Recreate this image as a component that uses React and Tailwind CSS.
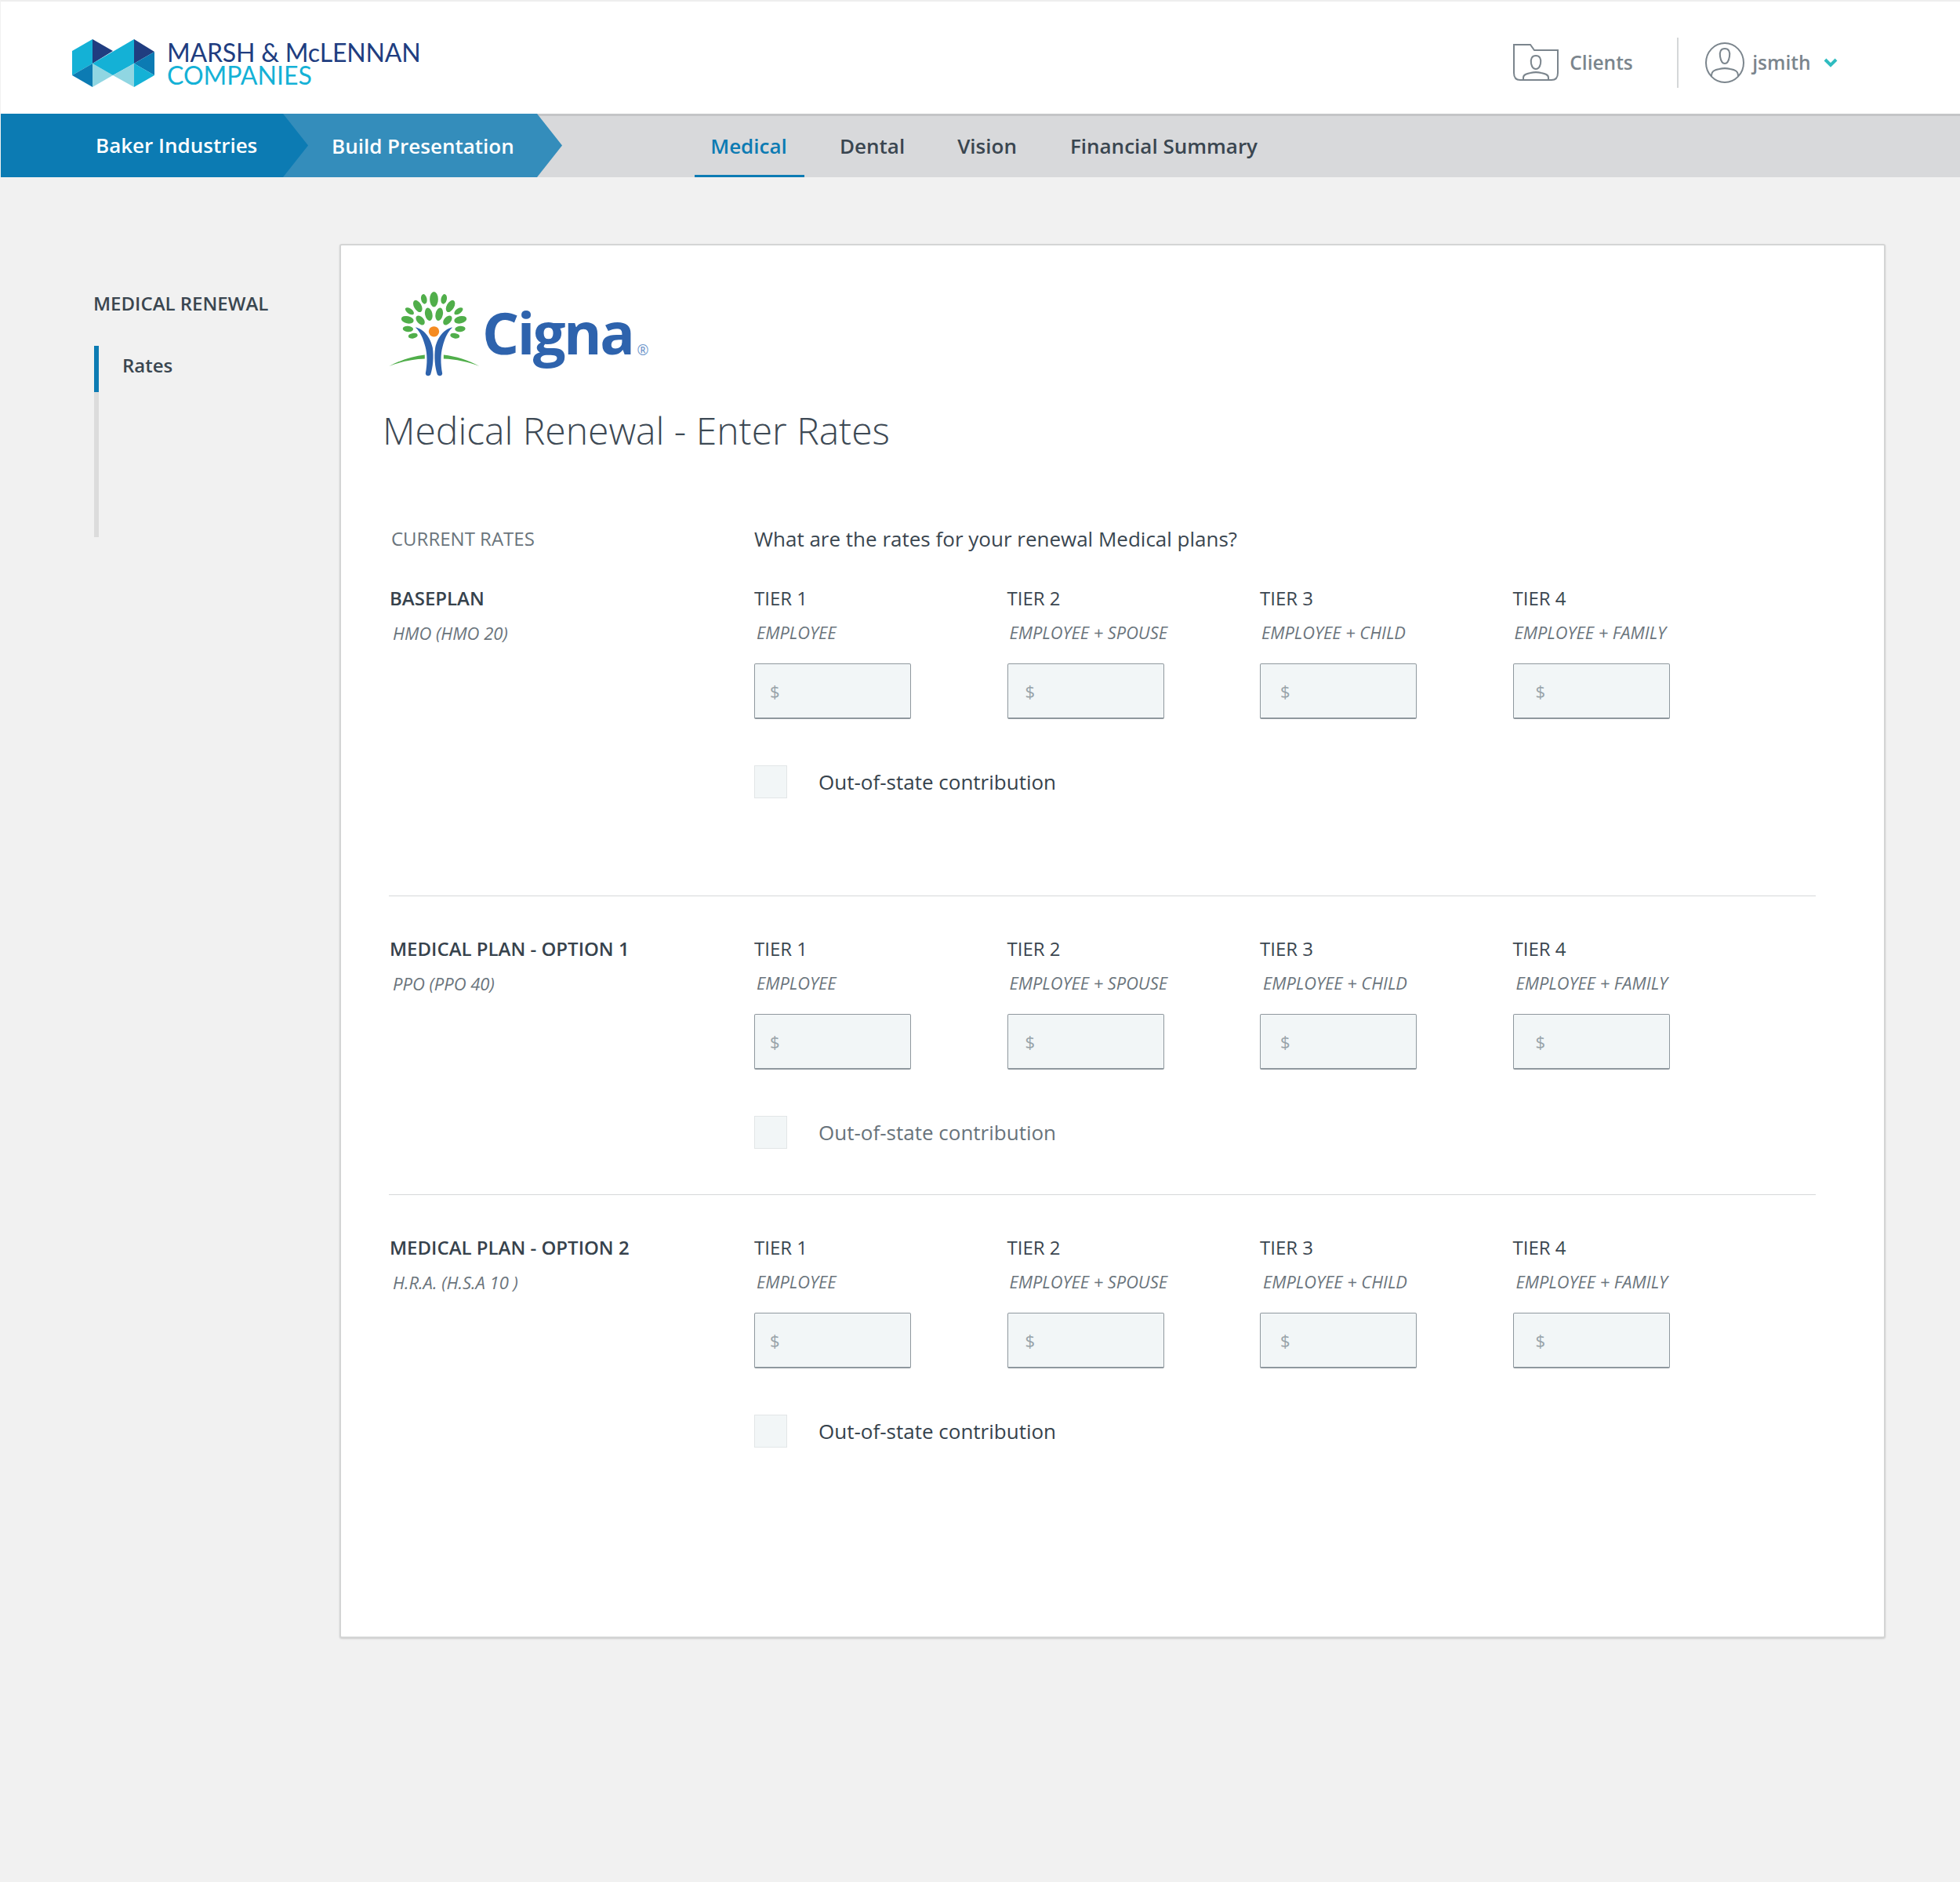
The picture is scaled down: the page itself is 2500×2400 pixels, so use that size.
import React from "react";

const FONT = "font-['Open_Sans',sans-serif]";

const tiers = [
  { tier: "TIER 1", sub: "EMPLOYEE", dollar: "pl-[19px]", base: "pl-[3px]", shift: "pl-[3px]" },
  { tier: "TIER 2", sub: "EMPLOYEE + SPOUSE", dollar: "pl-[22px]", base: "pl-[3px]", shift: "pl-[3px]" },
  { tier: "TIER 3", sub: "EMPLOYEE + CHILD", dollar: "pl-[25px]", base: "pl-[2px]", shift: "pl-[4px]" },
  { tier: "TIER 4", sub: "EMPLOYEE + FAMILY", dollar: "pl-[28px]", base: "pl-[2px]", shift: "pl-[4px]" },
];

function MarshLogo() {
  return (
    <svg width="108" height="63" viewBox="91 50 108 63" className="shrink-0">
      <polygon points="92,66 118,51 118,82 92,97" fill="#14b1d6" />
      <polygon points="118,51 144,66 118,82" fill="#203d80" />
      <polygon points="92,97 118,82 118,112" fill="#0c7bb3" />
      <polygon points="118,82 144,97 118,112" fill="#90d6e2" />
      <polygon points="118,82 171,51 171,82 144,97" fill="#14b1d6" />
      <polygon points="144,97 171,82 171,112" fill="#90d6e2" />
      <polygon points="171,51 197,67 171,82" fill="#203d80" />
      <polygon points="171,82 197,67 197,97" fill="#0c7bb3" />
      <polygon points="171,82 197,97 171,112" fill="#14b1d6" />
    </svg>
  );
}

function CignaTree() {
  const leaves = [
    [341, 125, 16, 29, 0], [303, 124, 11, 19, -12], [379, 124, 11, 19, 12],
    [279, 151, 14, 25, -30], [404, 151, 14, 25, 30], [248, 170, 10, 19, -55], [435, 170, 10, 19, 55],
    [240, 203, 24, 14, 12], [442, 203, 24, 14, -12], [321, 182, 14, 25, -12], [361, 182, 14, 25, 12],
    [289, 205, 13, 21, -42], [393, 205, 13, 21, 42], [242, 238, 20, 11, 4], [441, 238, 20, 11, -4],
    [261, 264, 18, 10, -10], [421, 264, 18, 10, 10],
  ];
  return (
    <svg width="122" height="112" viewBox="160 90 365 335" className="shrink-0">
      {leaves.map(([cx, cy, rx, ry, a], i) => (
        <ellipse key={i} cx={cx} cy={cy} rx={rx} ry={ry} fill="#50ae4a" transform={`rotate(${a} ${cx} ${cy})`} />
      ))}
      <circle cx="341" cy="248" r="20" fill="#f58b21" />
      <path d="M270 232 C300 236 328 270 336 310 C341 345 337 385 328 412 C320 420 310 418 309 408 C316 370 316 335 308 305 C300 275 290 250 270 232 Z" fill="#2e63ad" />
      <path d="M412 232 C382 236 354 270 346 310 C341 345 345 385 354 412 C362 420 372 418 373 408 C366 370 366 335 374 305 C382 275 392 250 412 232 Z" fill="#2e63ad" />
      <path d="M170 380 C210 358 260 342 306 337 L306 352 C260 354 210 364 170 380 Z" fill="#50ae4a" />
      <path d="M514 380 C474 358 424 342 378 337 L378 352 C424 354 474 364 514 380 Z" fill="#50ae4a" />
    </svg>
  );
}

function FolderIcon() {
  return (
    <svg width="60" height="50" viewBox="0 0 60 50" fill="none" stroke="#7b858d" strokeWidth="2" className="shrink-0">
      <path d="M2 2 H23 L28 9 H58 V38 C58 44 55 47 50 47 H10 C5 47 2 44 2 38 Z" />
      <path d="M30 16 C35 16 37 20 36 26 C35 31 33 33 30 33 C27 33 25 31 24 26 C23 20 25 16 30 16 Z" />
      <path d="M14 47 V44 C14 40 18 39 23 38 C27 37 33 37 37 38 C42 39 46 40 46 44 V47" />
    </svg>
  );
}

function UserIcon() {
  return (
    <svg width="50" height="52" viewBox="0 0 50 52" fill="none" stroke="#7b858d" strokeWidth="2" className="shrink-0">
      <ellipse cx="25" cy="26" rx="24" ry="25" />
      <path d="M25 8 C30 8 32 12 31 18 C30 24 28 27 25 27 C22 27 20 24 19 18 C18 12 20 8 25 8 Z" />
      <path d="M8 43 C8 36 13 35 18 34 C22 33 28 33 32 34 C37 35 42 36 42 43" />
    </svg>
  );
}

function Tier({ t, shifted }) {
  return (
    <div className="w-[322.5px]">
      <div className="text-[24px] leading-[32px] text-[#3a4650]">{t.tier}</div>
      <div className={`mt-[12px] ${shifted ? t.shift : t.base} text-[21.8px] leading-[32px] italic text-[#6a747c]`}>{t.sub}</div>
      <div className="mt-[23px] flex h-[71px] w-[200px] items-center rounded-[2px] border border-[#8f989e] border-b-2 bg-[#f2f6f7] text-[22px]">
        <span className={`${t.dollar} text-[#98a3a9]`}>$</span>
      </div>
    </div>
  );
}

function Plan({ name, type, muted, padBottom, divider, shifted }) {
  return (
    <section className={`${padBottom} ${divider ? "border-b border-[#d6d8d9]" : ""} flex w-[1820px]`}>
      <div className="w-[466px] pl-[1px]">
        <div className="text-[24px] font-semibold leading-[32px] text-[#36424c]">{name}</div>
        <div className="mt-[12px] pl-[4px] text-[22px] leading-[32px] italic text-[#6a747c]">{type}</div>
      </div>
      <div>
        <div className="flex">
          {tiers.map((t) => (
            <Tier key={t.tier} t={t} shifted={shifted} />
          ))}
        </div>
        <div className="mt-[59px] flex items-center">
          <span className="h-[42px] w-[42px] border border-[#e2e6e7] bg-[#f2f6f7]" />
          <span className={`ml-[40px] text-[26px] leading-[42px] ${muted ? "text-[#68737b]" : "text-[#36424c]"}`}>
            Out-of-state contribution
          </span>
        </div>
      </div>
    </section>
  );
}

export default function App() {
  return (
    <div className={`${FONT} flex h-[2400px] w-[2500px] flex-col bg-[#f1f1f1] pl-px`}>
      <header className="flex h-[145px] shrink-0 items-center border-t-2 border-[#eeeeee] bg-white pl-[90px] pr-[156px] pt-[13px]">
        <MarshLogo />
        <div className="ml-[14px] mt-[2px] font-['Lato',sans-serif]">
          <div className="whitespace-nowrap text-[32px] leading-[29px] tracking-[-0.2px] text-[#203d80]">MARSH &amp; McLENNAN</div>
          <div className="whitespace-nowrap text-[32px] leading-[29px] text-[#14b1d6]">COMPANIES</div>
        </div>
        <div className="ml-auto flex items-center">
          <FolderIcon />
          <span className="ml-[13px] text-[24.5px] font-semibold text-[#7b858d]">Clients</span>
          <span className="ml-[56.5px] h-[64px] w-[2px] bg-[#d5d7d8]" />
          <span className="ml-[34px]"><UserIcon /></span>
          <span className="ml-[10px] text-[24.5px] font-semibold text-[#7b858d]">jsmith</span>
          <svg width="18" height="12" viewBox="0 0 18 12" className="ml-[16.5px]" fill="none" stroke="#2fbcc0" strokeWidth="4">
            <path d="M2 2 L9 9 L16 2" />
          </svg>
        </div>
      </header>

      <nav className="flex h-[81px] shrink-0 items-stretch bg-[linear-gradient(#c4c5c7_3px,#d8d9db_3px)]">
        <div className="relative z-10 flex w-[392px] items-center bg-[#0c7bb3] pl-[121px] text-[26px] font-semibold text-white [clip-path:polygon(0_0,360px_0,100%_50%,360px_100%,0_100%)]">
          Baker Industries
        </div>
        <div className="-ml-[32px] flex w-[356px] items-center bg-[#348dbb] pl-[62px] pt-[2px] text-[26px] font-semibold text-white [clip-path:polygon(0_0,324px_0,100%_50%,324px_100%,0_100%)]">
          Build Presentation
        </div>
        <div className="ml-[169px] flex items-stretch pt-[2px] text-[26px] font-semibold text-[#3a4650]">
          <span className="flex w-[140px] items-center justify-center border-b-[3px] border-[#0c7bb3] pr-[2px] pt-[3px] text-[#0c7bb3]">Medical</span>
          <span className="ml-[45px] flex items-center">Dental</span>
          <span className="ml-[67px] flex items-center">Vision</span>
          <span className="ml-[68px] flex items-center">Financial Summary</span>
        </div>
      </nav>

      <main className="flex flex-1 items-start pl-[119px] pt-[85px]">
        <aside className="-ml-px w-[314px] pt-[60px]">
          <div className="text-[24px] font-semibold leading-[32px] text-[#3a4650]">MEDICAL RENEWAL</div>
          <div className="ml-px mt-[38px] h-[244px] w-[6px] bg-[#dcdcdc]">
            <div className="flex h-[59px] w-[6px] items-center whitespace-nowrap bg-[#0c7bb3]">
              <span className="-mt-[10px] ml-[36px] text-[24px] font-semibold text-[#3a4650]">Rates</span>
            </div>
          </div>
        </aside>

        <div className="h-[1778px] w-[1972px] rounded-[3px] border-2 border-[#d4d5d5] bg-white pl-[58px] pt-[57px] shadow-[0_1px_2px_rgba(0,0,0,0.15)]">
          <div className="flex items-center">
            <CignaTree />
            <span className="-mt-[4px] text-[74px] font-bold leading-[112px] tracking-[-2.5px] text-[#2e63ad]">Cigna</span>
            <span className="ml-[5px] mt-[40px] text-[18px] text-[#6f97cc]">®</span>
          </div>
          <h1 className="-ml-[5px] mt-[35px] text-[48px] font-light leading-[64px] text-[#3d4954]">Medical Renewal - Enter Rates</h1>

          <div className="pl-[3px]">
            <div className="mt-[90px] flex w-[1820px]">
              <div className="w-[466px] pl-[3px] text-[24px] leading-[32px] text-[#6a747c]">CURRENT RATES</div>
              <div className="text-[26px] leading-[32px] text-[#3a4650]">What are the rates for your renewal Medical plans?</div>
            </div>

            <div className="mt-[44px]">
              <Plan name="BASEPLAN" type="HMO (HMO 20)" divider padBottom="pb-[124px]" />
            </div>
            <div className="mt-[51px]">
              <Plan name="MEDICAL PLAN - OPTION 1" type="PPO (PPO 40)" muted divider shifted padBottom="pb-[58px]" />
            </div>
            <div className="mt-[51px]">
              <Plan name="MEDICAL PLAN - OPTION 2" type="H.R.A. (H.S.A 10 )" shifted padBottom="pb-0" />
            </div>
          </div>
        </div>
      </main>
    </div>
  );
}
